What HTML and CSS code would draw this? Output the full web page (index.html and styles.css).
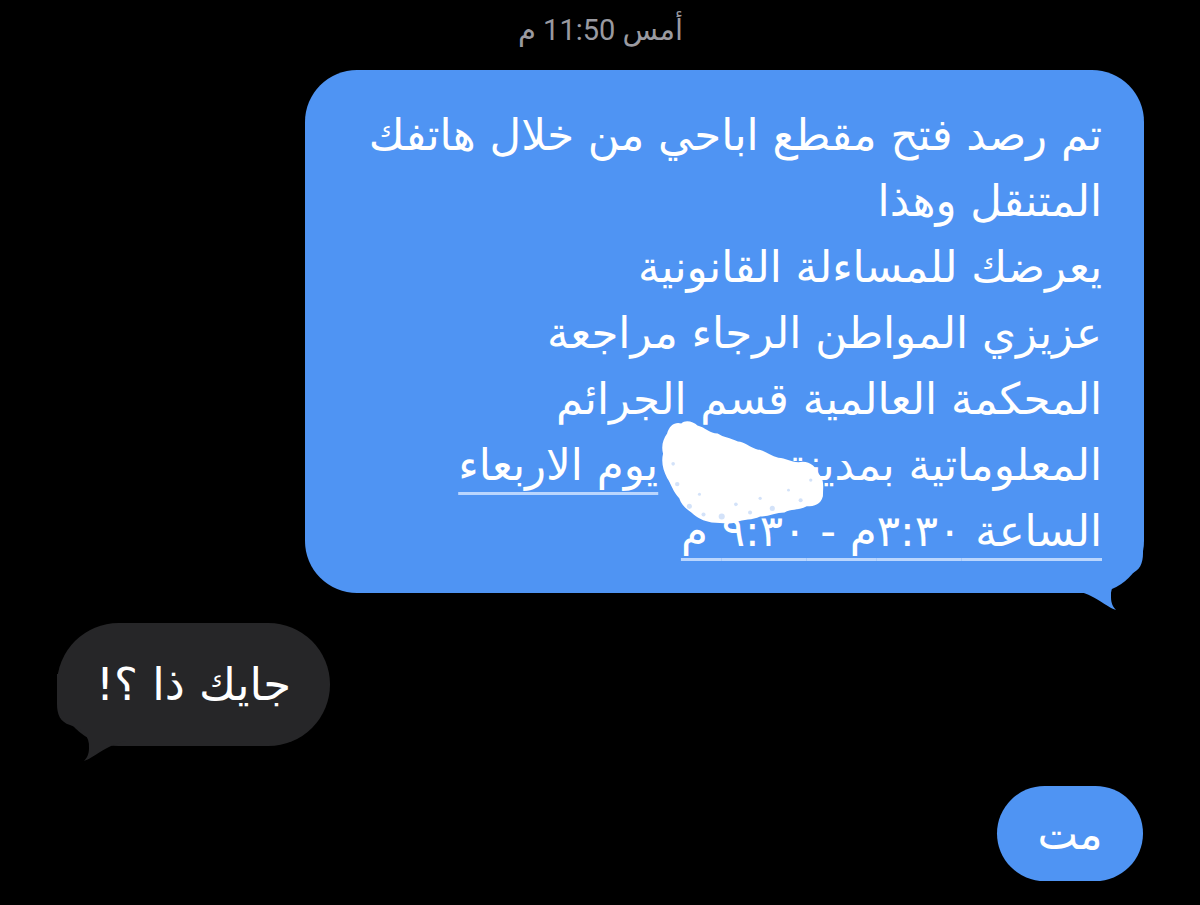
FILE: index.html
```html
<!DOCTYPE html>
<html lang="ar" dir="rtl">
<head>
  <meta charset="UTF-8" />
  <title>الرسائل</title>
  <link rel="stylesheet" href="styles.css">
</head>
<body>

  <main class="chat">
    <div class="stamp">أمس 11:50 م</div>

    <div class="bubble sent big">
      <span class="line">تم رصد فتح مقطع اباحي من خلال هاتفك</span>
      <span class="line">المتنقل وهذا</span>
      <span class="line">يعرضك للمساءلة القانونية</span>
      <span class="line">عزيزي المواطن الرجاء مراجعة</span>
      <span class="line">المحكمة العالمية قسم الجرائم</span>
      <span class="line">المعلوماتية بمدينة<span class="hidden-city"></span> <span class="date">يوم الاربعاء</span></span>
      <span class="line"><span class="date">الساعة ٣:٣٠م - ٩:٣٠ م</span></span>

      <!-- scribble hiding the city name -->
      <svg class="scribble" viewBox="0 0 170 110" aria-hidden="true">
        <path fill="#ffffff"
          d="M8 14 C10 6 16 2 22 4 C26 0 34 2 38 6 C46 8 50 14 58 14 C64 18 70 18 78 22 C84 22 90 28 98 30 C104 30 110 36 118 38 C126 38 132 44 142 42 C150 42 156 48 158 54 C164 60 162 68 162 76 C160 84 154 86 146 86 C140 90 132 88 124 92 C116 92 108 96 100 96 C92 100 84 98 76 102 C68 104 60 102 52 102 C44 100 38 98 32 92 C26 88 22 84 20 78 C14 72 12 64 8 58 C4 50 2 42 4 34 C2 26 4 20 8 14 Z" />
        <g fill="#c9dcf8" opacity="0.8">
          <circle cx="30" cy="86" r="2.5" />
          <circle cx="44" cy="94" r="2" />
          <circle cx="62" cy="96" r="3" />
          <circle cx="90" cy="92" r="2" />
          <circle cx="112" cy="88" r="2.5" />
          <circle cx="140" cy="80" r="2" />
          <circle cx="14" cy="44" r="1.8" />
          <circle cx="18" cy="64" r="2.2" />
          <circle cx="100" cy="78" r="1.6" />
          <circle cx="76" cy="84" r="1.8" />
          <circle cx="150" cy="60" r="1.6" />
          <circle cx="40" cy="74" r="1.5" />
          <circle cx="128" cy="70" r="1.4" />
        </g>
      </svg>

      <svg class="tail" viewBox="0 0 70 90" aria-hidden="true">
        <path d="M69 0 V30 C69 40 66 48 56 51 C44 55 36 62 37 74 C37 80 39 84 42 87 C32 84 22 72 0 67 V0 Z" />
      </svg>
    </div>

    <div class="bubble received">
      <span class="line">جايك ذا ؟!</span>
      <svg class="tail" viewBox="0 0 70 90" aria-hidden="true">
        <path d="M69 0 V30 C69 40 66 48 56 51 C44 55 36 62 37 74 C37 80 39 84 42 87 C32 84 22 72 0 67 V0 Z" />
      </svg>
    </div>

    <div class="bubble sent small">
      <span class="line">مت</span>
    </div>
  </main>

</body>
</html>
```

FILE: styles.css
```css
body {
  margin: 0;
  background: #000;
  color: #fff;
  font-family: 'DejaVu Sans', sans-serif;
  width: 1200px;
  height: 905px;
  overflow: hidden;
}

.chat {
  display: flex;
  flex-direction: column;
  padding: 0 56px 0 57px;
}

.stamp {
  align-self: center;
  margin-top: 12px;
  line-height: 36px;
  font-size: 29px;
  color: #9a9aa0;
  font-family: Roboto, 'DejaVu Sans', sans-serif;
}

.bubble {
  position: relative;
  isolation: isolate;
  display: flex;
  flex-direction: column;
  box-sizing: border-box;
}
.bubble .line {
  display: block;
  white-space: nowrap;
}

.sent {
  align-self: flex-start;
  background: #4f94f3;
}
.sent .tail path {
  fill: #4f94f3;
}

.big {
  margin-top: 22px;
  width: 839px;
  padding: 32px 42px 29px 30px;
  border-radius: 52px;
  font-size: 43.5px;
  line-height: 66px;
}

.hidden-city {
  display: inline-block;
  width: 114px;
}

.date {
  text-decoration: underline;
  text-decoration-color: rgba(205, 226, 255, 0.85);
  text-decoration-thickness: 3px;
  text-underline-offset: 12px;
}

.scribble {
  position: absolute;
  left: 354px;
  top: 348px;
  width: 172px;
  height: 114px;
}

/* tails sit under the text */
.tail {
  position: absolute;
  z-index: -1;
  width: 70px;
  height: 90px;
  bottom: -20px;
}
.sent .tail {
  right: 0;
}

.received {
  align-self: flex-end;
  margin-top: 30px;
  width: 273px;
  height: 123px;
  border-radius: 62px;
  background: #262628;
  font-size: 45px;
  align-items: center;
  justify-content: center;
}
.received .tail {
  left: -1px;
  bottom: -18px;
  transform: scaleX(-1);
}
.received .tail path {
  fill: #262628;
}

.small {
  margin-top: 40px;
  margin-right: 1px;
  width: 146px;
  height: 95px;
  border-radius: 48px;
  font-size: 43px;
  align-items: center;
  justify-content: center;
}
```
